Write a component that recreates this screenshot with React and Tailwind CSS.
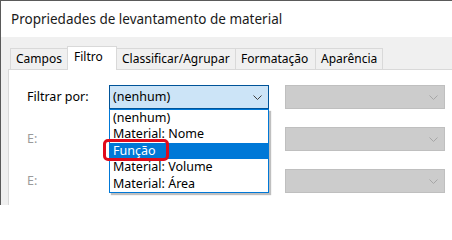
// Diálogo "Propriedades de levantamento de material" — aba Filtro com lista aberta
const font = { fontFamily: '"Noto Sans", "Open Sans", sans-serif' }

function Chevron({ color = '#404040' }) {
  return (
    <svg width="9" height="5" viewBox="0 0 9 5" className="shrink-0">
      <path d="M0.5 0.5 L4.5 4.5 L8.5 0.5" fill="none" stroke={color} strokeWidth="1" />
    </svg>
  )
}

function Tab({ label, selected, className = '' }) {
  if (selected) {
    return (
      <div className={`relative z-10 -mb-px flex h-[24px] items-start border border-b-0 border-[#d9d9d9] bg-white px-[6px] pt-[1px] ${className}`}>
        {label}
      </div>
    )
  }
  return (
    <div className={`flex h-[21px] items-center border border-b-0 border-[#d9d9d9] bg-[#f0f0f0] px-[5px] ${className}`}>
      {label}
    </div>
  )
}

function DisabledCombo() {
  return (
    <div className="flex h-[24px] w-[160px] items-center justify-end border border-[#bfbfbf] bg-[#cccccc] pr-[6px]">
      <Chevron color="#a6a6a6" />
    </div>
  )
}

const options = ['(nenhum)', 'Material: Nome', 'Função', 'Material: Volume', 'Material: Área']

export default function App() {
  return (
    <div
      className="relative h-[205px] w-[452px] overflow-hidden border-l border-t border-[#5a5a5a] bg-[#f0f0f0] text-[12px] text-black"
      style={font}
    >
      <div className="flex h-[36px] items-center bg-white pl-[10px] text-[13.5px] text-[#1a1a1a]">
        Propriedades de levantamento de material
      </div>

      <div className="flex items-end pl-[9px] pt-[9px]">
        <Tab label="Campos" className="w-[57px] border-r-0" />
        <Tab label="Filtro" selected className="w-[50px]" />
        <Tab label="Classificar/Agrupar" className="w-[119px] border-l-0" />
        <Tab label="Formatação" className="w-[80px] border-l-0" />
        <Tab label="Aparência" className="w-[67px] border-l-0" />
      </div>

      <div className="ml-[7px] h-[200px] border border-r-0 border-[#d9d9d9] bg-white pl-[18px] pt-[15px] text-[12.5px]">
        <div className="flex flex-col gap-[18px]">
          <div className="flex items-center">
            <span className="w-[82px]">Filtrar por:</span>
            <div className="relative">
              <div className="flex h-[24px] w-[160px] items-center justify-between border border-[#005499] bg-[#cce4f7] pl-[3px] pr-[6px]">
                <span>(nenhum)</span>
                <Chevron />
              </div>
              <div className="absolute left-0 top-[24px] z-20 w-[160px] border border-[#0078d7] bg-white shadow-[2px_2px_1px_rgba(0,0,0,0.25)]">
                {options.map((o) => (
                  <div
                    key={o}
                    className={`h-[16.4px] pl-[3px] leading-[16px] ${o === 'Função' ? 'bg-[#0078d7] text-white' : ''}`}
                  >
                    {o}
                  </div>
                ))}
              </div>
              <div className="absolute left-[-6px] top-[54px] z-30 h-[22px] w-[66px] rounded-[5px] border-[3px] border-[#e00b1c]" />
            </div>
            <div className="ml-[16px]">
              <DisabledCombo />
            </div>
          </div>
          <div className="flex items-center">
            <span className="w-[82px] text-[#9a9a9a]">E:</span>
            <div className="w-[160px]" />
            <div className="ml-[16px]">
              <DisabledCombo />
            </div>
          </div>
          <div className="flex items-center">
            <span className="w-[82px] text-[#9a9a9a]">E:</span>
            <div className="w-[160px]" />
            <div className="ml-[16px]">
              <DisabledCombo />
            </div>
          </div>
        </div>
      </div>
    </div>
  )
}
